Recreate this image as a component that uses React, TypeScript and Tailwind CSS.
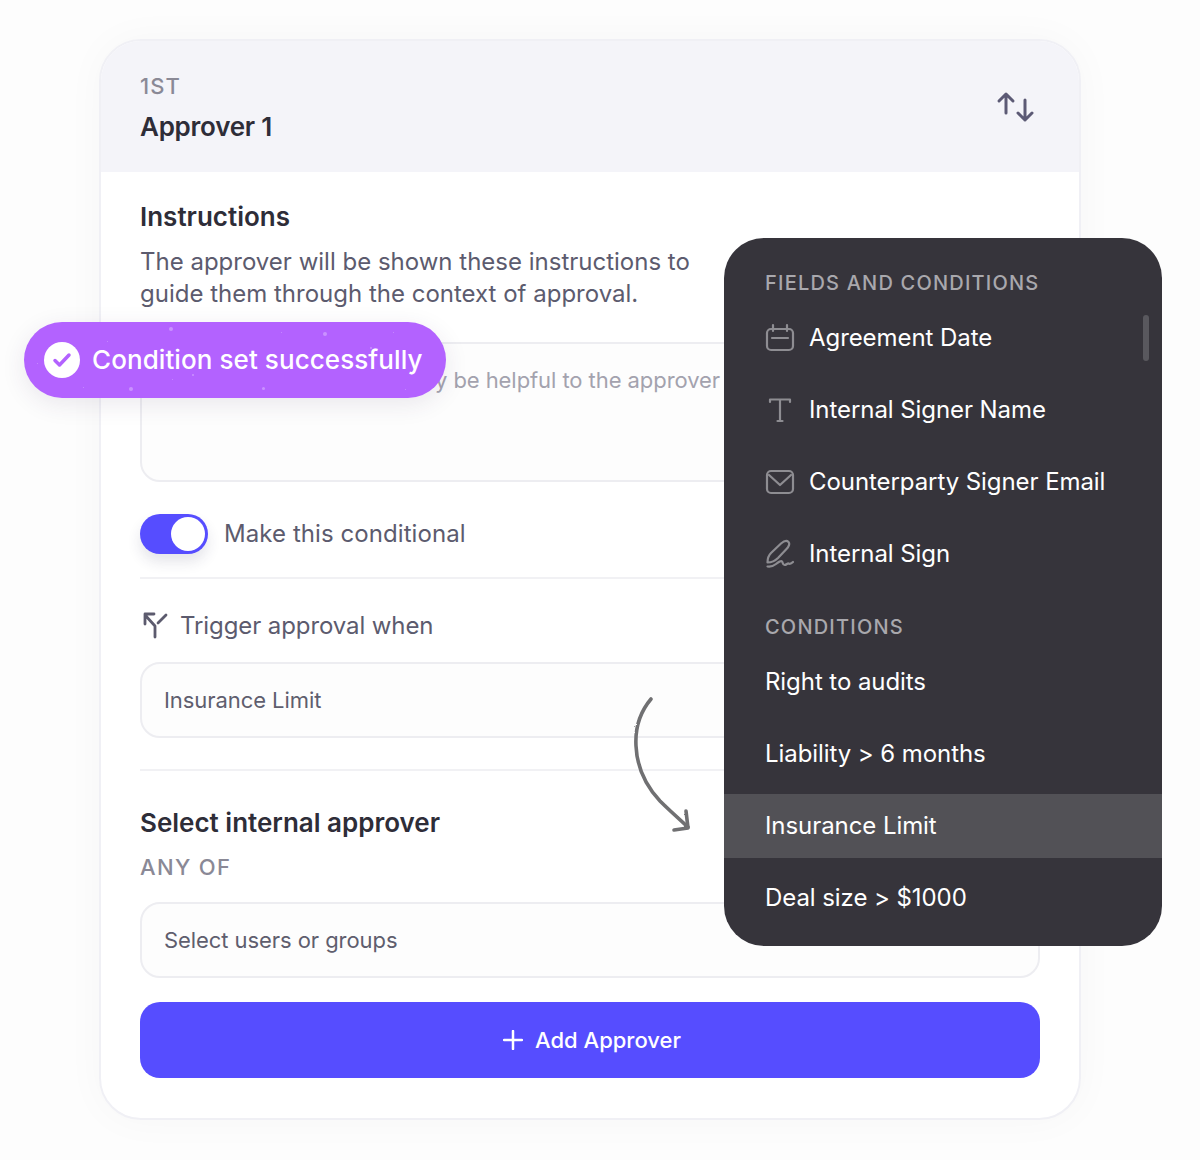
const font = "font-['Inter',sans-serif]";

const speckles = [
  [169, 327, 4], [323, 332, 4], [129, 387, 4], [262, 387, 3], [107, 341, 1], [281, 332, 1], [393, 332, 1],
  [37, 363, 1], [83, 387, 1], [172, 379, 1], [405, 389, 1], [370, 347, 2], [192, 374, 2],
];

function SwapIcon() {
  return (
    <svg width="40" height="36" viewBox="996 88 40 36" fill="none" stroke="#5c5a75" strokeWidth="3" strokeLinecap="round" strokeLinejoin="round">
      <path d="M1006 112V93M999 100l7-7 7 7" />
      <path d="M1025 99v20M1018 112l7 7 7-7" />
    </svg>
  );
}

function FieldIcon({ children }: { children: React.ReactNode }) {
  return (
    <svg width="30" height="30" viewBox="0 0 30 30" fill="none" stroke="#8e8d92" strokeWidth="2.200" strokeLinecap="round" strokeLinejoin="round" className="shrink-0">
      {children}
    </svg>
  );
}

function FieldRow({ label, icon }: { label: string; icon?: React.ReactNode }) {
  return (
    <div className="h-16 flex items-center gap-[14px] pl-[41px]">
      {icon}
      <span className="text-[24px] leading-8 tracking-[-0.003em] text-white">{label}</span>
    </div>
  );
}

function SectionLabel({ children }: { children: string }) {
  return <div className="pl-[41px] text-[20px] leading-7 font-medium tracking-[0.06em] text-[#a9a8ad]">{children}</div>;
}

function Dropdown() {
  return (
    <div className="absolute left-[724px] top-[238px] w-[438px] h-[708px] rounded-[40px] bg-[#36343b] overflow-hidden pt-[31px] flex flex-col">
      <SectionLabel>FIELDS AND CONDITIONS</SectionLabel>
      <div className="absolute left-[419px] top-[77px] w-[6px] h-[46px] rounded-full bg-[#59585e]" />
      <div className="mt-[9px] flex flex-col gap-2">
        <FieldRow
          label="Agreement Date"
          icon={
            <FieldIcon>
              <rect x="2" y="6" width="26" height="21" rx="4" />
              <path d="M8 2v6M22 2v6M7 15h16" />
            </FieldIcon>
          }
        />
        <FieldRow
          label="Internal Signer Name"
          icon={
            <FieldIcon>
              <path d="M5 7V4.500h20V7M15 4.500V26M12.500 26h5" />
            </FieldIcon>
          }
        />
        <FieldRow
          label="Counterparty Signer Email"
          icon={
            <FieldIcon>
              <rect x="2" y="4" width="26" height="22" rx="4" />
              <path d="M4 8l11 10 11-10" />
            </FieldIcon>
          }
        />
        <FieldRow
          label="Internal Sign"
          icon={
            <FieldIcon>
              <path d="M2.500 23.500C2.500 19 4 16 6 14l10-9.500C19 2 22 1.500 23.500 3s.5 4.500-2 7L13 19c-3 3-7 4.500-10.500 4.500z" />
              <path d="M2.500 27.500c3 .5 6-.5 8.500-2.500s5-3.500 6-2.500 .5 3.500 2.500 3.500 3-2 4-1.500 2.500 .5 4.500-1.500" />
            </FieldIcon>
          }
        />
      </div>
      <div className="mt-[27px]">
        <SectionLabel>CONDITIONS</SectionLabel>
      </div>
      <div className="mt-[9px] flex flex-col gap-2">
        <FieldRow label="Right to audits" />
        <FieldRow label="Liability > 6 months" />
        <div className="bg-[#525156]">
          <FieldRow label="Insurance Limit" />
        </div>
        <FieldRow label="Deal size > $1000" />
      </div>
    </div>
  );
}

function Toast() {
  return (
    <div className="absolute left-[24px] top-[322px] w-[422px] h-[76px] rounded-full bg-[#b362ff] flex items-center pl-5 gap-3 overflow-hidden shadow-[0_6px_24px_rgba(60,40,90,0.1)]">
      {speckles.map(([x, y, s], i) => (
        <span
          key={i}
          className="absolute rounded-full bg-white/30"
          style={{ left: x - 24, top: y - 322, width: s, height: s }}
        />
      ))}
      <span className="w-9 h-9 rounded-full bg-white flex items-center justify-center shrink-0">
        <svg width="20" height="16" viewBox="0 0 20 16" fill="none" stroke="#b362ff" strokeWidth="3.500" strokeLinecap="round" strokeLinejoin="round">
          <path d="M3 8.500l4.500 4.500L17 3" />
        </svg>
      </span>
      <span className="text-[26px] leading-9 font-medium tracking-[0.003em] text-white whitespace-nowrap">Condition set successfully</span>
    </div>
  );
}

function HandArrow() {
  return (
    <svg className="absolute left-[620px] top-[680px]" width="80" height="160" viewBox="620 680 80 160" fill="none" stroke="#707072" strokeLinecap="round" strokeLinejoin="round">
      <defs>
        <filter id="pencil" x="-20%" y="-20%" width="140%" height="140%">
          <feTurbulence type="fractalNoise" baseFrequency="0.5" numOctaves="2" seed="4" />
          <feDisplacementMap in="SourceGraphic" scale="2" />
        </filter>
      </defs>
      <g filter="url(#pencil)">
        <path d="M651 699C640 712 635 728 636 746c1 22 10 40 24 55 9 9 18 17 28 26" strokeWidth="3.600" />
        <path d="M686 811l2 17-14 2" strokeWidth="3.600" />
      </g>
    </svg>
  );
}

function InputBox({ children }: { children: string }) {
  return (
    <div className="h-[76px] rounded-[20px] border-2 border-[#ededf1] bg-[#fdfdfd] flex items-center pl-[22px] text-[22px] tracking-[-0.003em] text-[#5f5e6e]">
      {children}
    </div>
  );
}

function Divider() {
  return <div className="h-[2px] bg-[#f1f1f4]" />;
}

export default function App() {
  return (
    <div className={`relative w-[1200px] h-[1160px] bg-[#fdfdfd] overflow-hidden pt-[39px] pl-[99px] ${font}`}>
      <div className="w-[982px] rounded-[42px] border-2 border-[#f0f0f5] bg-white overflow-hidden shadow-[0_0_40px_rgba(30,30,60,0.03)]">
        <div className="h-[131px] bg-[#f4f4f9] pl-[39px] pr-[43px] pt-[2px] flex items-center justify-between">
          <div>
            <div className="text-[22px] leading-8 font-medium tracking-[0.05em] text-[#8a8996]">1ST</div>
            <div className="mt-[7px] text-[26px] leading-9 font-semibold tracking-[-0.01em] text-[#2e2d38]">Approver 1</div>
          </div>
          <div className="-mt-[2px]">
            <SwapIcon />
          </div>
        </div>
        <div className="px-[39px] pt-[29px] pb-[38px]">
          <div className="text-[26px] leading-8 font-semibold text-[#2e2d38]">Instructions</div>
          <p className="mt-[13px] text-[24px] leading-8 text-[#5c5b6e]">
            The approver will be shown these instructions to
            <br />
            guide them through the context of approval.
          </p>
          <div className="mt-8 h-[140px] rounded-[20px] border-2 border-[#ededf1] bg-[#fdfdfd] pl-[22px] pt-[20px] text-[22px] leading-8 tracking-[-0.003em] whitespace-nowrap overflow-hidden text-[#a3a2ae]">
            Add some context that may be helpful to the approver
          </div>
          <div className="mt-8 h-10 flex items-center gap-4">
            <div className="w-[68px] h-10 rounded-full bg-[#564dff] flex items-center justify-end pr-[3px] shadow-[0_8px_14px_rgba(40,40,80,0.12)]">
              <span className="w-[34px] h-[34px] rounded-full bg-white" />
            </div>
            <span className="text-[24px] leading-8 tracking-[0.003em] text-[#5c5b6e]">Make this conditional</span>
          </div>
          <div className="mt-[23px]">
            <Divider />
          </div>
          <div className="mt-[31px] h-8 flex items-center gap-[10px]">
            <svg width="30" height="30" viewBox="141 611 30 30" fill="none" stroke="#5c5b6e" strokeWidth="2.800" strokeLinecap="round" strokeLinejoin="round">
              <path d="M156 637v-11l-10-11M146 624v-10h9M159 623l8-8" />
            </svg>
            <span className="text-[24px] leading-8 tracking-[-0.004em] text-[#5c5b6e]">Trigger approval when</span>
          </div>
          <div className="mt-5">
            <InputBox>Insurance Limit</InputBox>
          </div>
          <div className="mt-[31px]">
            <Divider />
          </div>
          <div className="mt-[34px] text-[26px] leading-9 font-semibold text-[#2e2d38]">Select internal approver</div>
          <div className="mt-3 text-[22px] leading-7 tracking-[0.06em] font-medium text-[#8a8996]">ANY OF</div>
          <div className="mt-[21px]">
            <InputBox>Select users or groups</InputBox>
          </div>
          <div className="mt-6 h-[76px] rounded-[20px] bg-[#564dff] flex items-center justify-center gap-3 pl-[4px] text-white">
            <svg width="20" height="20" viewBox="0 0 20 20" fill="none" stroke="#ffffff" strokeWidth="2.500" strokeLinecap="round">
              <path d="M10 1v18M1 10h18" />
            </svg>
            <span className="text-[22px] leading-8 font-[450]">Add Approver</span>
          </div>
          <div className="h-[2px]" />
        </div>
      </div>
      <HandArrow />
      <Dropdown />
      <Toast />
    </div>
  );
}
